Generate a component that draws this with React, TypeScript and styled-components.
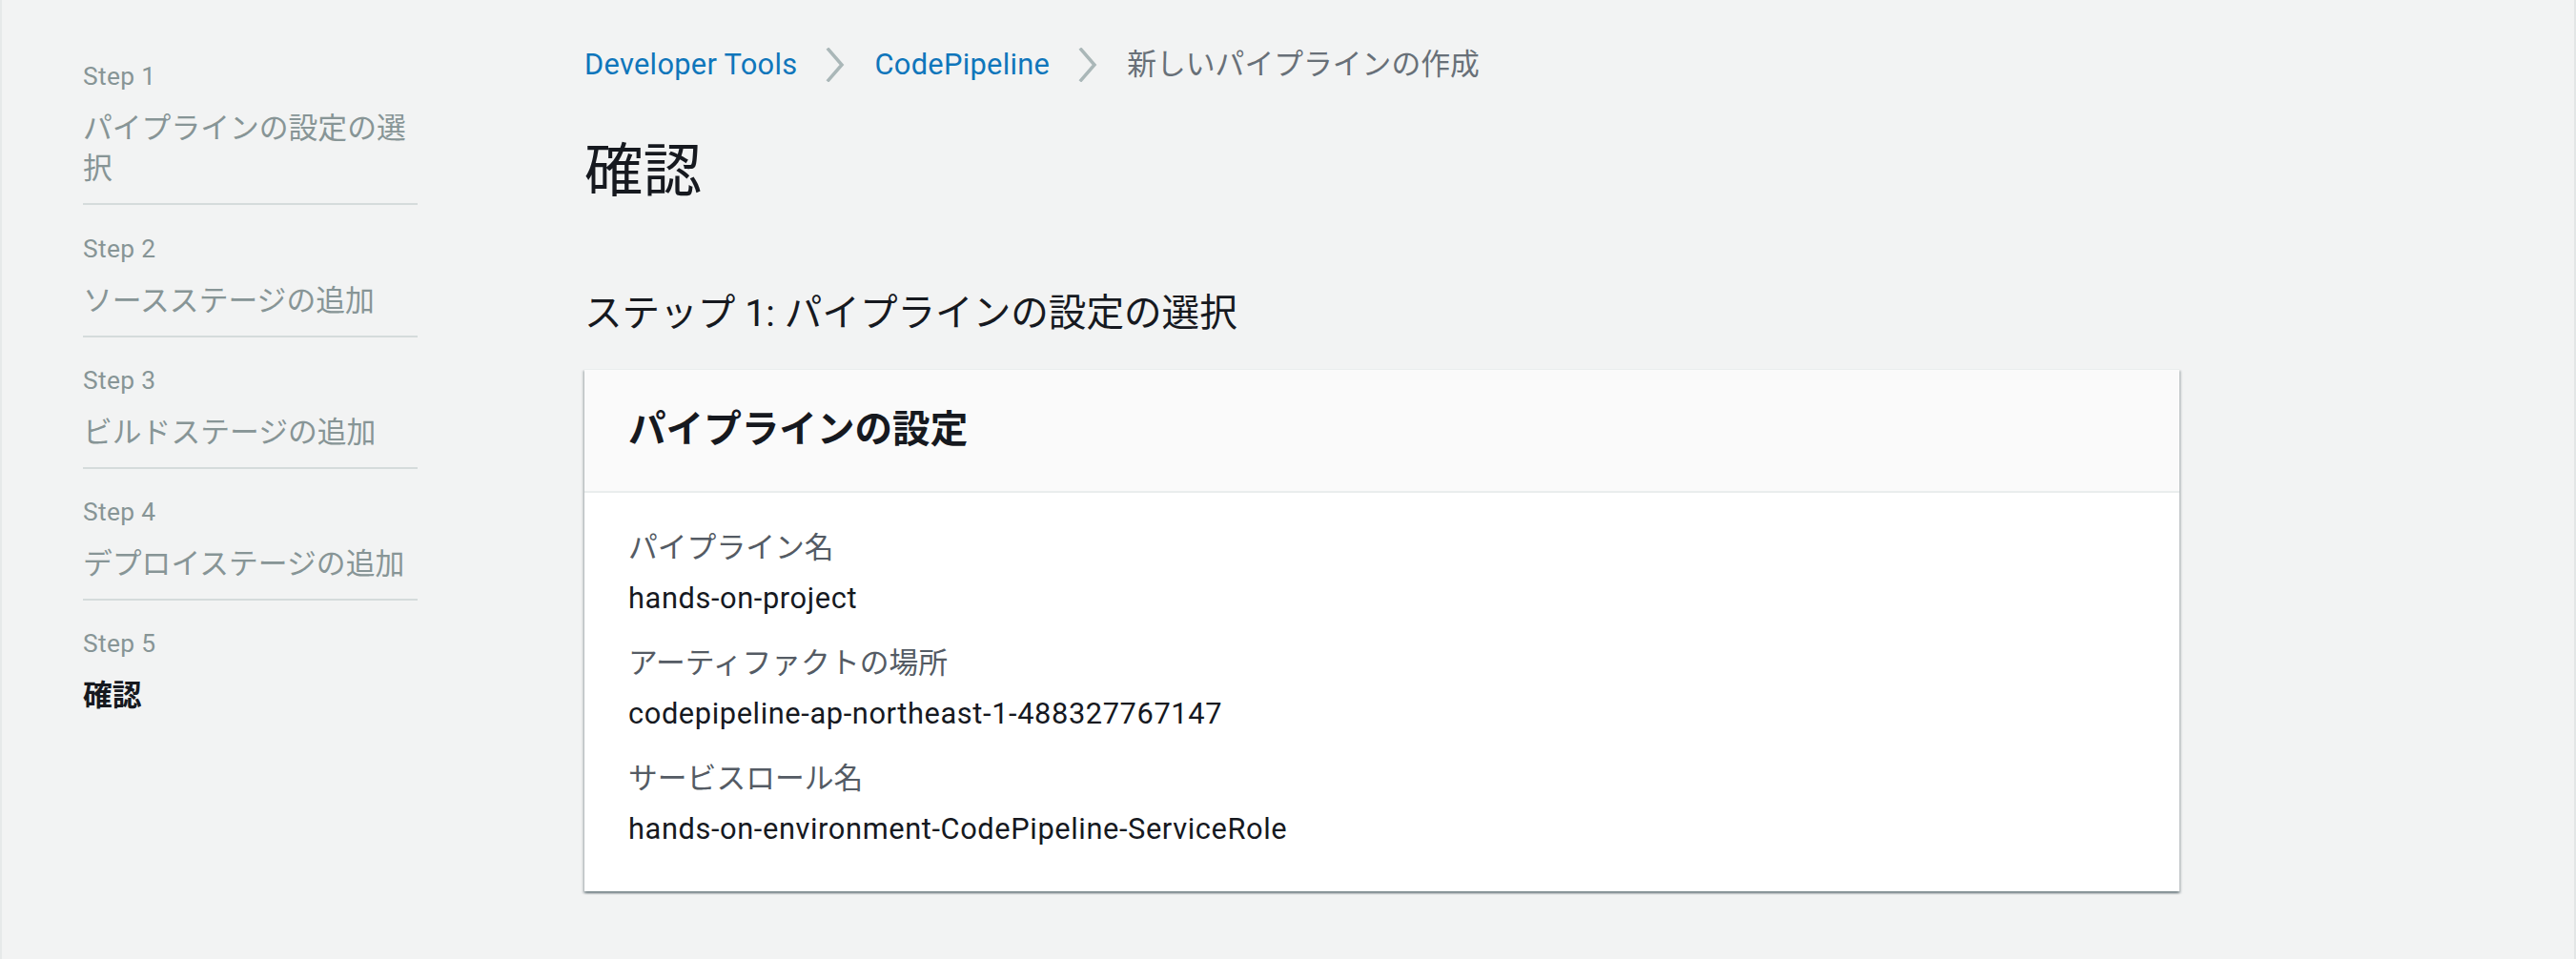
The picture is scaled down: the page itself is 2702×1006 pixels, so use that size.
import React from "react";
import styled, { createGlobalStyle } from "styled-components";

const GlobalStyle = createGlobalStyle`
  html, body {
    margin: 0;
    padding: 0;
    background: #f2f3f3;
  }
  body {
    font-family: Roboto, "Noto Sans CJK JP", sans-serif;
    color: #16191f;
  }
  * { box-sizing: border-box; }
`;

const Page = styled.div`
  display: flex;
  align-items: flex-start;
  min-height: 1006px;
  width: 2702px;
  background: #f2f3f3;
  border-left: 2px solid #e6e9e9;
  border-right: 2px solid #e3e6e6;
  padding-left: 85px;
`;

const Nav = styled.nav`
  width: 351px;
  flex: none;
  padding-top: 34px;
`;

const NavList = styled.ol`
  list-style: none;
  margin: 0;
  padding: 0;
`;

const NavItem = styled.li<{ $last?: boolean }>`
  padding-top: 26px;
  padding-bottom: ${(p) => (p.$last ? "0" : "15px")};
  border-bottom: ${(p) => (p.$last ? "none" : "2px solid #d5dbdb")};
  &:first-child { padding-top: 26px; }
  &:nth-child(n + 3) { padding-top: 25px; }
`;

const StepNo = styled.div`
  font-size: 26.4px;
  line-height: 40px;
  color: #879596;
  letter-spacing: 0.3px;
  margin-bottom: 14px;
`;

const StepName = styled.div<{ $active?: boolean }>`
  font-size: 30.8px;
  line-height: 42px;
  color: ${(p) => (p.$active ? "#16191f" : "#879596")};
  font-weight: ${(p) => (p.$active ? 700 : 400)};
`;

const Main = styled.main`
  margin-left: 175px;
  width: 1673px;
  flex: none;
  padding-top: 46px;
`;

const Crumbs = styled.div`
  display: flex;
  align-items: center;
  height: 44px;
  font-size: 30.8px;
  line-height: 44px;
`;

const CrumbLink = styled.a`
  color: #0f76bb;
  text-decoration: none;
  letter-spacing: 0.3px;
`;

const CrumbCurrent = styled.span`
  color: #687078;
`;

const Chevron = styled.svg`
  width: 20px;
  height: 36px;
  margin: 0 31px 0 30px;
  flex: none;
`;

const Title = styled.h1`
  margin: 50px 0 0;
  font-size: 61.6px;
  line-height: 80px;
  font-weight: 400;
  color: #16191f;
`;

const StepHeading = styled.h2`
  margin: 81px 0 0;
  font-size: 39.6px;
  line-height: 56px;
  font-weight: 400;
  color: #16191f;
`;

const Card = styled.section`
  margin-top: 30px;
  background: #ffffff;
  border-top: 1px solid #eaeded;
  box-shadow: 0 2px 2px 0 rgba(0, 28, 36, 0.35),
    2px 2px 2px 0 rgba(0, 28, 36, 0.15),
    -2px 2px 2px 0 rgba(0, 28, 36, 0.15);
`;

const CardHeader = styled.header`
  background: #fafafa;
  padding: 35px 46px 36px;
  border-bottom: 2px solid #eaeded;
`;

const CardTitle = styled.h3`
  margin: 0;
  font-size: 39.6px;
  line-height: 56px;
  font-weight: 700;
  color: #16191f;
`;

const CardBody = styled.div`
  padding: 36px 46px 43px;
  display: flex;
  flex-direction: column;
  gap: 24px;
`;

const Field = styled.div`
  display: flex;
  flex-direction: column;
  gap: 9px;
`;

const FieldLabel = styled.div`
  font-size: 30.8px;
  line-height: 44px;
  color: #545b64;
`;

const FieldValue = styled.div`
  font-size: 30.8px;
  line-height: 44px;
  color: #16191f;
  letter-spacing: 0.6px;
`;

const ChevronIcon = () => (
  <Chevron viewBox="0 0 20 36">
    <polyline
      points="3,2 17,18 3,34"
      fill="none"
      stroke="#aab7b8"
      strokeWidth="3.5"
      strokeLinecap="square"
      strokeLinejoin="miter"
    />
  </Chevron>
);

const steps = [
  { no: "Step 1", name: "パイプラインの設定の選択" },
  { no: "Step 2", name: "ソースステージの追加" },
  { no: "Step 3", name: "ビルドステージの追加" },
  { no: "Step 4", name: "デプロイステージの追加" },
  { no: "Step 5", name: "確認", active: true },
];

const fields = [
  { label: "パイプライン名", value: "hands-on-project" },
  { label: "アーティファクトの場所", value: "codepipeline-ap-northeast-1-488327767147" },
  { label: "サービスロール名", value: "hands-on-environment-CodePipeline-ServiceRole" },
];

export default function App() {
  return (
    <>
      <GlobalStyle />
      <Page>
        <Nav>
          <NavList>
            {steps.map((s, i) => (
              <NavItem key={s.no} $last={i === steps.length - 1}>
                <StepNo>{s.no}</StepNo>
                <StepName $active={s.active}>{s.name}</StepName>
              </NavItem>
            ))}
          </NavList>
        </Nav>
        <Main>
          <Crumbs>
            <CrumbLink href="#">Developer Tools</CrumbLink>
            <ChevronIcon />
            <CrumbLink href="#">CodePipeline</CrumbLink>
            <ChevronIcon />
            <CrumbCurrent>新しいパイプラインの作成</CrumbCurrent>
          </Crumbs>
          <Title>確認</Title>
          <StepHeading>ステップ 1: パイプラインの設定の選択</StepHeading>
          <Card>
            <CardHeader>
              <CardTitle>パイプラインの設定</CardTitle>
            </CardHeader>
            <CardBody>
              {fields.map((f) => (
                <Field key={f.label}>
                  <FieldLabel>{f.label}</FieldLabel>
                  <FieldValue>{f.value}</FieldValue>
                </Field>
              ))}
            </CardBody>
          </Card>
        </Main>
      </Page>
    </>
  );
}
